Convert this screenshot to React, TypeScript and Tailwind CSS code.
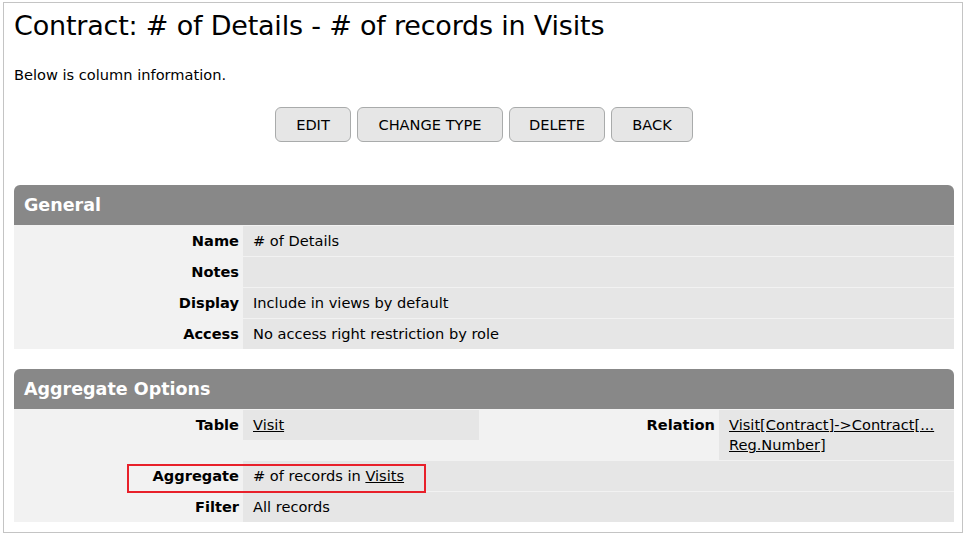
import React from 'react'

const font = { fontFamily: '"DejaVu Sans", Verdana, sans-serif' }

function Label({ children }: { children: React.ReactNode }) {
  return (
    <div className="bg-[#f2f2f2] pr-[4px] py-[5px] text-right font-bold leading-[20px] h-[30px]">
      {children}
    </div>
  )
}

function Value({ children, className = '' }: { children?: React.ReactNode; className?: string }) {
  return (
    <div className={`bg-[#e6e6e6] pl-[10px] pr-[6px] py-[5px] leading-[20px] min-h-[30px] ${className}`}>
      {children}
    </div>
  )
}

function SectionHeader({ title }: { title: string }) {
  return (
    <div className="h-[40px] bg-[#888888] rounded-t-[6px] px-[10px] flex items-center text-white font-bold text-[17.5px]">
      {title}
    </div>
  )
}

export default function App() {
  const buttons = [
    { label: 'EDIT', w: 'w-[76px]' },
    { label: 'CHANGE TYPE', w: 'w-[146px]' },
    { label: 'DELETE', w: 'w-[96px]' },
    { label: 'BACK', w: 'w-[82px]' },
  ]

  return (
    <div className="bg-white min-h-[538px] pt-[2px] pl-[3px] text-black text-[14.6px]" style={font}>
      <div className="relative w-[960px] border border-[#c4c4c4] pl-[10px] pr-[8px] pb-[10px]">
        <h1 className="text-[27px] leading-[34px] pt-[6px] tracking-[-0.2px]">
          Contract: # of Details - # of records in Visits
        </h1>
        <p className="mt-[23px] leading-[18px]">Below is column information.</p>

        <div className="mt-[23px] flex justify-center gap-[6px]">
          {buttons.map((b) => (
            <button
              key={b.label}
              className={`${b.w} h-[35px] rounded-[6px] bg-[#e6e6e6] border border-[#a9abab] text-[14.6px] text-black`}
            >
              {b.label}
            </button>
          ))}
        </div>

        {/* General */}
        <div className="mt-[43px]">
          <SectionHeader title="General" />
          <div className="grid grid-cols-[229px_1fr] gap-y-px pt-px bg-[#f2f2f2]">
            <Label>Name</Label>
            <Value># of Details</Value>
            <Label>Notes</Label>
            <Value />
            <Label>Display</Label>
            <Value>Include in views by default</Value>
            <Label>Access</Label>
            <Value>No access right restriction by role</Value>
          </div>
        </div>

        {/* Aggregate Options */}
        <div className="mt-[20px]">
          <SectionHeader title="Aggregate Options" />
          <div className="bg-[#f2f2f2] pt-px">
            <div className="grid grid-cols-[229px_236px_240px_1fr] items-start">
              <Label>Table</Label>
              <Value>
                <a className="underline" href="#">Visit</a>
              </Value>
              <Label>Relation</Label>
              <Value>
                <a className="underline" href="#">
                  Visit[Contract]-&gt;Contract[...
                  <br />
                  Reg.Number]
                </a>
              </Value>
            </div>
            <div className="grid grid-cols-[229px_1fr] gap-y-px pt-px">
              <Label>Aggregate</Label>
              <Value>
                # of records in <a className="underline" href="#">Visits</a>
              </Value>
              <Label>Filter</Label>
              <Value>All records</Value>
            </div>
          </div>
        </div>

        <div className="absolute left-[123px] top-[461px] w-[299px] h-[29px] border-2 border-[#e8202a] pointer-events-none" />
      </div>
    </div>
  )
}
